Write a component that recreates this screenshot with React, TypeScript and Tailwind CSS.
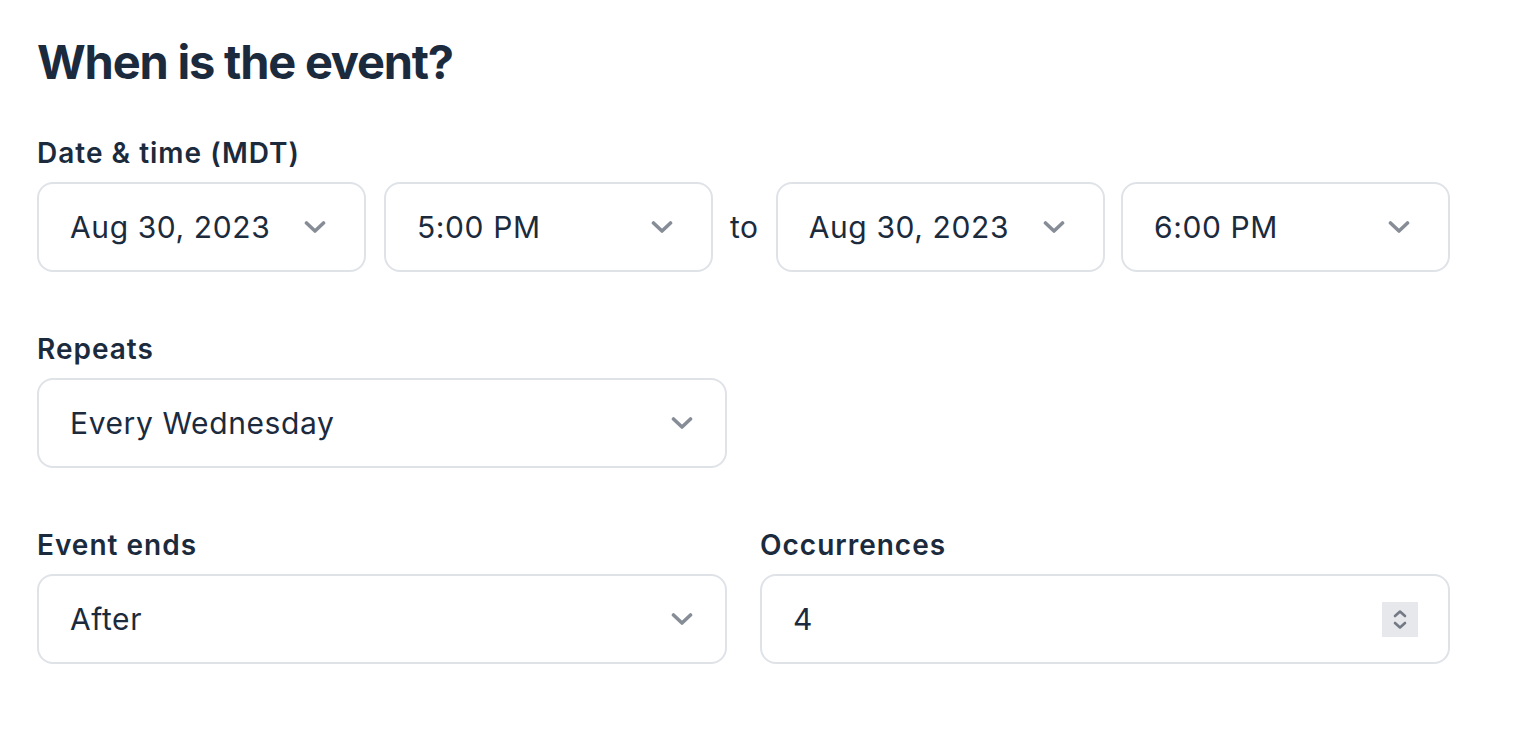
import React from "react";

const Chevron = () => (
  <svg width="22" height="14" viewBox="0 0 22 14" fill="none" className="shrink-0">
    <path d="M2.5 3 L11 11 L19.5 3" stroke="#878d97" strokeWidth="3.6" strokeLinecap="round" strokeLinejoin="round" />
  </svg>
);

const Select = ({ value, className, pr }: { value: string; className: string; pr: string }) => (
  <div
    className={`flex h-[90px] items-center justify-between rounded-[16px] border-2 border-[#dfe3e8] bg-white pl-[31px] ${pr} ${className}`}
  >
    <span className="text-[30px] leading-none tracking-[0.6px] text-[#1b2b3d]">{value}</span>
    <Chevron />
  </div>
);

const Label = ({ children }: { children: React.ReactNode }) => (
  <div className="text-[28px] font-semibold leading-[40px] tracking-[1px] text-[#1b2b3d]">{children}</div>
);

export default function App() {
  return (
    <div className="min-h-[729px] w-[1517px] bg-white pl-[37px] pt-[33px]" style={{ fontFamily: "Inter, 'Noto Sans', sans-serif" }}>
      <h1 className="text-[47px] font-bold leading-[58px] tracking-[-1.2px] text-[#1b2b3d]">When is the event?</h1>

      <div className="mt-[42px]">
        <Label>Date &amp; time (MDT)</Label>
        <div className="mt-[9px] flex w-[1413px] items-center">
          <Select value="Aug 30, 2023" className="w-[329px]" pr="pr-[38px]" />
          <Select value="5:00 PM" className="ml-[18px] w-[329px]" pr="pr-[38px]" />
          <span className="ml-[17px] mr-[17px] text-[30px] leading-none tracking-[0.6px] text-[#1b2b3d]">to</span>
          <Select value="Aug 30, 2023" className="w-[329px]" pr="pr-[38px]" />
          <Select value="6:00 PM" className="ml-auto w-[329px]" pr="pr-[38px]" />
        </div>
      </div>

      <div className="mt-[57px]">
        <Label>Repeats</Label>
        <div className="mt-[9px]">
          <Select value="Every Wednesday" className="w-[690px]" pr="pr-[32px]" />
        </div>
      </div>

      <div className="mt-[57px] flex gap-[33px]">
        <div className="w-[690px]">
          <Label>Event ends</Label>
          <div className="mt-[9px]">
            <Select value="After" className="w-[690px]" pr="pr-[32px]" />
          </div>
        </div>
        <div className="w-[690px]">
          <Label>Occurrences</Label>
          <div className="mt-[9px] flex h-[90px] items-center justify-between rounded-[16px] border-2 border-[#dfe3e8] bg-white pl-[31px] pr-[30px]">
            <span className="text-[30px] leading-none text-[#1b2b3d]">4</span>
            <div className="flex h-[35px] w-[36px] flex-col items-center justify-center gap-[3px] bg-[#e6e8ec]">
              <svg width="14" height="9" viewBox="0 0 14 9" fill="none">
                <path d="M2 7 L7 2.5 L12 7" stroke="#737a85" strokeWidth="2.6" strokeLinecap="round" strokeLinejoin="round" />
              </svg>
              <svg width="14" height="9" viewBox="0 0 14 9" fill="none">
                <path d="M2 2 L7 6.5 L12 2" stroke="#737a85" strokeWidth="2.6" strokeLinecap="round" strokeLinejoin="round" />
              </svg>
            </div>
          </div>
        </div>
      </div>
    </div>
  );
}
